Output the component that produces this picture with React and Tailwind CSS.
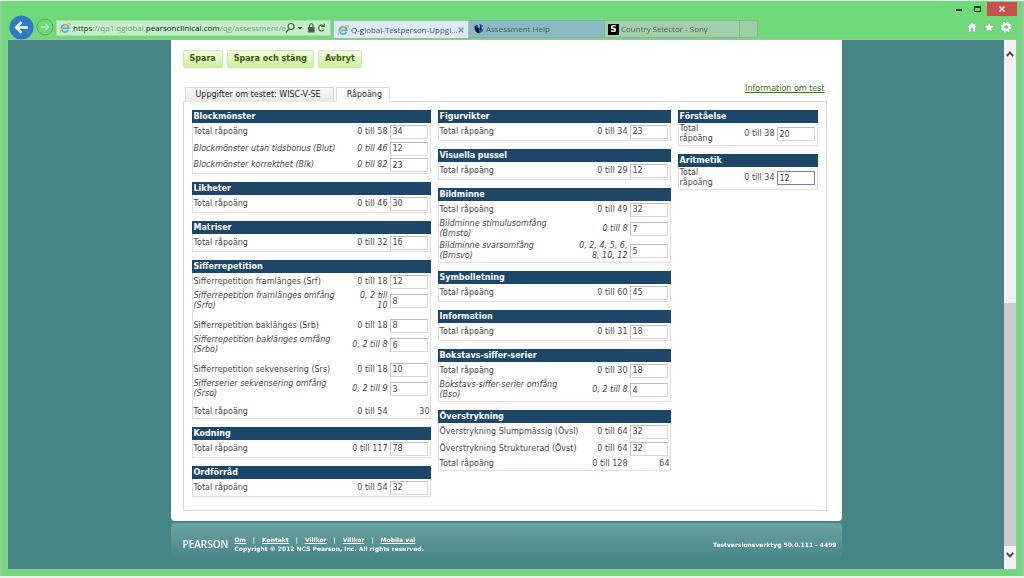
import React from "react";

const LEFT = [
  {
    title: "Blockmönster",
    rows: [
      { label: "Total råpoäng", range: "0 till 58", value: "34" },
      { label: "Blockmönster utan tidsbonus (Blut)", range: "0 till 46", value: "12", italic: true },
      { label: "Blockmönster korrekthet (Blk)", range: "0 till 82", value: "23", italic: true, kind: "short" },
    ],
  },
  { title: "Likheter", rows: [{ label: "Total råpoäng", range: "0 till 46", value: "30" }] },
  { title: "Matriser", rows: [{ label: "Total råpoäng", range: "0 till 32", value: "16" }] },
  {
    title: "Sifferrepetition",
    rows: [
      { label: "Sifferrepetition framlänges (Srf)", range: "0 till 18", value: "12" },
      { label: "Sifferrepetition framlänges omfång\n(Srfo)", range: "0, 2 till\n10", value: "8", italic: true, kind: "spaced" },
      { label: "Sifferrepetition baklänges (Srb)", range: "0 till 18", value: "8" },
      { label: "Sifferrepetition baklänges omfång\n(Srbo)", range: "0, 2 till 8", value: "6", italic: true, kind: "spaced" },
      { label: "Sifferrepetition sekvensering (Srs)", range: "0 till 18", value: "10" },
      { label: "Sifferserier sekvensering omfång\n(Srso)", range: "0, 2 till 9", value: "3", italic: true, kind: "spaced" },
      { label: "Total råpoäng", range: "0 till 54", sum: "30", kind: "sum" },
    ],
  },
  { title: "Kodning", rows: [{ label: "Total råpoäng", range: "0 till 117", value: "78" }] },
  { title: "Ordförråd", rows: [{ label: "Total råpoäng", range: "0 till 54", value: "32" }] },
];

const MIDDLE = [
  { title: "Figurvikter", rows: [{ label: "Total råpoäng", range: "0 till 34", value: "23" }] },
  { title: "Visuella pussel", rows: [{ label: "Total råpoäng", range: "0 till 29", value: "12" }] },
  {
    title: "Bildminne",
    rows: [
      { label: "Total råpoäng", range: "0 till 49", value: "32" },
      { label: "Bildminne stimulusomfång\n(Bmsto)", range: "0 till 8", value: "7", italic: true, kind: "double" },
      { label: "Bildminne svarsomfång\n(Bmsvo)", range: "0, 2, 4, 5, 6,\n8, 10, 12", value: "5", italic: true, kind: "double" },
    ],
  },
  { title: "Symbolletning", rows: [{ label: "Total råpoäng", range: "0 till 60", value: "45" }] },
  { title: "Information", rows: [{ label: "Total råpoäng", range: "0 till 31", value: "18" }] },
  {
    title: "Bokstavs-siffer-serier",
    rows: [
      { label: "Total råpoäng", range: "0 till 30", value: "18" },
      { label: "Bokstavs-siffer-serier omfång\n(Bso)", range: "0, 2 till 8", value: "4", italic: true, kind: "double" },
    ],
  },
  {
    title: "Överstrykning",
    rows: [
      { label: "Överstrykning Slumpmässig (Övsl)", range: "0 till 64", value: "32" },
      { label: "Överstrykning Strukturerad (Övst)", range: "0 till 64", value: "32" },
      { label: "Total råpoäng", range: "0 till 128", sum: "64", kind: "sum" },
    ],
  },
];

const RIGHT = [
  { title: "Förståelse", rows: [{ label: "Total\nråpoäng", range: "0 till 38", value: "20", kind: "double" }] },
  { title: "Aritmetik", rows: [{ label: "Total\nråpoäng", range: "0 till 34", value: "12", kind: "double", active: true }] },
];

const ROW_HEIGHT = {
  single: "h-[17px]",
  short: "h-4",
  double: "h-[22px]",
  spaced: "h-[27px]",
  sum: "h-[13px]",
};

function ScoreRow({ row, id }) {
  const kind = row.kind || "single";
  const pad = kind === "spaced" ? "pb-[5px]" : "pb-0";
  return (
    <tr className={`${ROW_HEIGHT[kind]} ${row.italic ? "italic" : ""}`}>
      <td className={`whitespace-pre pl-px align-middle ${pad}`}>
        {row.sum ? row.label : <label htmlFor={id} className="block">{row.label}</label>}
      </td>
      <td className={`whitespace-pre pr-[2px] text-right align-middle ${pad}`}>{row.range}</td>
      <td className={`w-10 align-middle not-italic ${pad}`}>
        {row.sum ? (
          <div className="text-right">{row.sum}</div>
        ) : (
          <input
            id={id}
            type="text"
            autoFocus={row.active}
            defaultValue={row.value}
            className={`block h-[14px] w-[38px] border bg-white pl-[2px] outline-none ${
              row.active ? "border-[#7080b8]" : "border-[#d9d9d9] border-t-[#bdbdbd] border-l-[#c4c4c4]"
            }`}
          />
        )}
      </td>
    </tr>
  );
}

function ScoreSection({ section }) {
  return (
    <section>
      <h3 className="h-[13px] bg-[#1c4769] pl-[2px] text-[8px] leading-[13px] font-bold text-white">{section.title}</h3>
      <table className="w-full border-separate border-spacing-0 border-x border-b border-[#dedede]">
        <tbody>
          {section.rows.map((row, i) => (
            <ScoreRow key={i} row={row} id={`${section.title}-${i}`} />
          ))}
        </tbody>
      </table>
    </section>
  );
}

function Column({ sections }) {
  return (
    <div className="flex flex-col gap-2">
      {sections.map((s) => (
        <ScoreSection key={s.title} section={s} />
      ))}
    </div>
  );
}

function IeLogo() {
  return (
    <svg viewBox="0 0 12 12" className="size-3 shrink-0">
      <path d="M9.300 8.200A3.700 3.700 0 1 1 9.800 6.300H3.500" fill="none" stroke="#5aa9dd" strokeWidth="1.800" />
      <path d="M1.400 10.800C.2 9 7.500 1 11 1.400c.8.600.2 2-.4 2.800" fill="none" stroke="#e5c04e" strokeWidth="1.200" />
    </svg>
  );
}

function TitleBar() {
  return (
    <div className="relative flex h-[39px] items-end px-[7px]">
      <button aria-label="Tillbaka" className="mr-px size-[25px] shrink-0">
        <svg viewBox="0 0 26 26" className="size-full">
          <circle cx="13" cy="13" r="12.500" fill="#2b7bc8" />
          <path d="M19.500 13H8M13 7.500L7.500 13l5.500 5.500" fill="none" stroke="#fff" strokeWidth="2.600" />
        </svg>
      </button>
      <button aria-label="Framåt" className="mb-1 ml-[1px] size-[18px] shrink-0">
        <svg viewBox="0 0 18 18" className="size-full">
          <circle cx="9" cy="9" r="8" fill="none" stroke="#55b162" />
          <path d="M5 9h7.500M9.500 6L12.500 9l-3 3" fill="none" stroke="#b5efbb" strokeWidth="1.300" />
        </svg>
      </button>
      <div className="mb-1 ml-[2px] flex h-4 w-[275px] shrink-0 items-center border border-[#a0dfa8] bg-[#c3f0c8] pl-[2px]">
        <IeLogo />
        <div className="ml-[2px] w-[211px] text-[8px] whitespace-nowrap text-[#7b9c80]">
          <span className="text-[#2c3a2e]">https</span>://qa1.qglobal.
          <span className="text-[#18241a]">pearsonclinical.com</span>/qg/assessment/e
        </div>
        <svg viewBox="0 0 44 12" className="ml-[1px] h-3 w-11 shrink-0" fill="none" stroke="#4c5f50" strokeWidth="1.200">
          <circle cx="6" cy="4.500" r="3" />
          <path d="M4 7L1 10.500" />
          <path d="M12.500 5h5l-2.500 2.500z" fill="#4c5f50" stroke="none" />
          <path d="M23.500 5.500h5.500v4.500h-5.500z" fill="#4c5f50" />
          <path d="M24.500 5V3.500a1.700 1.700 0 0 1 3.500 0V5" />
          <path d="M38.500 4A2.900 2.900 0 1 0 39 7.500M39.200 1.500V4.500h-3" />
        </svg>
      </div>
      <nav className="ml-[2px] flex h-5 min-w-0 pb-[2px] text-[8px] leading-none text-[#4b6155]">
        <a href="#tab1" className="flex w-[136px] items-center border border-b-0 border-[#9fc4b4] bg-[#dcebf3] pl-[3px] text-[#4a5860]">
          <IeLogo />
          <span className="ml-[2px] flex-1 whitespace-nowrap">Q-global-Testperson-Uppgi...</span>
          <svg viewBox="0 0 6 6" className="mr-1 size-[6px]" stroke="#7d8b90" strokeWidth="1.200">
            <path d="M.5.5l5 5M5.500.5l-5 5" />
          </svg>
        </a>
        <a href="#tab2" className="flex w-[135px] items-center border border-x-0 border-[#7fb0aa] bg-[#8bbac1] pl-1">
          <svg viewBox="0 0 12 12" className="size-3 shrink-0">
            <circle cx="6" cy="5.500" r="4.600" fill="#2460b5" />
            <path d="M1.500 3Q3.500 3 5.500 5L6.500 10.500Q2 9.500 1.500 3z" fill="#0e1730" />
            <path d="M7.500 2.500v5" fill="none" stroke="#0e1730" strokeWidth="1.200" />
            <path d="M4.500 1.200q2.500 1 1.200 3.500M9 4l1 2" fill="none" stroke="#c9dcf5" strokeWidth="1.100" />
          </svg>
          <span className="ml-[1px]">Assessment Help</span>
        </a>
        <a href="#tab3" className="flex w-[136px] items-center border border-[#85b88c] bg-[#a2cfac] pl-[3px]">
          <span className="flex size-[11px] items-center justify-center bg-black [font-family:'DejaVu_Sans',sans-serif] text-[9px] font-bold text-white">S</span>
          <span className="ml-[2px]">Country Selector - Sony</span>
        </a>
        <button aria-label="Ny flik" className="w-[18px] border border-l-0 border-[#85b88c] bg-[#9bd0a4]" />
      </nav>
      <div className="absolute top-0 right-[5px] flex items-center">
        <button aria-label="Minimera" className="flex h-[15px] w-5 items-center justify-center pt-[3px]">
          <span className="h-[2px] w-[6px] bg-[#1d3a22]" />
        </button>
        <button aria-label="Maximera" className="flex h-[15px] w-4 items-center justify-center">
          <span className="h-[6px] w-[7px] border border-t-2 border-[#1d3a22]" />
        </button>
        <button aria-label="Stäng" className="ml-[2px] flex h-[14px] w-[30px] items-center justify-center bg-[#c7504f]">
          <svg viewBox="0 0 6 6" className="size-[6px]" stroke="#fff" strokeWidth="1.400">
            <path d="M.5.5l5 5M5.500.5l-5 5" />
          </svg>
        </button>
      </div>
      <div className="absolute top-5 right-[10px] flex gap-[5px]">
        <button aria-label="Hem" className="size-3">
          <svg viewBox="0 0 12 12" className="size-full" fill="#fff" stroke="#7a9c7e" strokeWidth=".6">
            <path d="M6 1.500L1 6.200l.8.8.7-.5V11h2.600V7.500h1.800V11h2.600V6.500l.7.500.8-.8-1.700-1.600V2.300H8v1z" />
          </svg>
        </button>
        <button aria-label="Favoriter" className="size-3">
          <svg viewBox="0 0 12 12" className="size-full" fill="#fff" stroke="#7a9c7e" strokeWidth=".6">
            <path d="M6 .8l1.500 3.600 3.900.3-3 2.500.9 3.800L6 9l-3.300 2 .9-3.800-3-2.500 3.900-.3z" />
          </svg>
        </button>
        <button aria-label="Verktyg" className="size-3">
          <svg viewBox="0 0 12 12" className="size-full" fill="none">
            <circle cx="6" cy="6" r="4.700" stroke="#7a9c7e" strokeWidth="2.400" strokeDasharray="2.200 1.490" />
            <circle cx="6" cy="6" r="4.600" stroke="#fff" strokeWidth="1.800" strokeDasharray="1.900 1.710" />
            <circle cx="6" cy="6" r="3" stroke="#fff" strokeWidth="1.800" />
          </svg>
        </button>
      </div>
    </div>
  );
}

function ScrollBar() {
  return (
    <div className="flex w-3 shrink-0 flex-col bg-[#f0f0f0]">
      <button aria-label="Rulla upp" className="flex h-7 items-center justify-center">
        <svg viewBox="0 0 8 6" className="h-[6px] w-2" fill="none" stroke="#505050" strokeWidth="2">
          <path d="M.8 5L4 1.500 7.200 5" />
        </svg>
      </button>
      <div className="flex-[235]" />
      <div className="flex-[244] bg-[#cdcdcd]" />
      <button aria-label="Rulla ned" className="flex h-[23px] items-center justify-center pb-[6px]">
        <svg viewBox="0 0 8 6" className="h-[6px] w-2" fill="none" stroke="#505050" strokeWidth="2">
          <path d="M.8 1L4 4.500 7.200 1" />
        </svg>
      </button>
    </div>
  );
}

const ACTION =
  "h-[18px] rounded-[2px] border border-[#d0e8b0] bg-linear-to-b from-[#f4fce6] to-[#cdf09b] px-[6px] text-[8px] font-bold text-[#3a6200] shadow-xs";

export default function App() {
  return (
    <div className="flex min-h-screen flex-col border-t border-b-2 border-[#e9f3ea] bg-[#70da7b] [font-family:'Open_Sans','Noto_Sans',sans-serif]">
      <div className="flex flex-1 flex-col border-x-2 border-[#98cba0] pb-[6px]">
        <TitleBar />
        <div className="mx-[5px] -mt-px flex flex-1 border border-[#a3bfa6] bg-[#468585] [font-family:'DejaVu_Sans',Verdana,sans-serif] text-[8px] leading-[10px] text-[#4a4a4a]">
          <div className="min-w-0 flex-1">
            <main className="mx-auto max-w-[671px] rounded-b-[4px] bg-white pt-[10px] pr-[15px] pb-[10px] pl-3">
              <div className="flex gap-1">
                <button className={ACTION}>Spara</button>
                <button className={ACTION}>Spara och stäng</button>
                <button className={ACTION}>Avbryt</button>
              </div>
              <div className="mt-4 -mb-px flex items-end">
                <button className="ml-[2px] h-[15px] border border-b-0 border-[#dcdcdc] bg-linear-to-b from-[#fafafa] to-[#e8e8e8] pr-[12px] pl-[10px] text-[#222]">
                  Uppgifter om testet: WISC-V-SE
                </button>
                <button className="relative ml-[2px] h-[15px] border border-b-0 border-[#d5dfe6] bg-white pr-[7px] pl-[10px] text-[#222]">
                  Råpoäng
                </button>
                <a href="#info" className="mr-[2px] mb-2 ml-auto text-[#3f7a10] underline">Information om test</a>
              </div>
              <div className="grid grid-cols-[239fr_233fr_140fr] items-start gap-[7px] border border-[#d3dbe0] px-2 pt-2 pb-[13px]">
                <Column sections={LEFT} />
                <Column sections={MIDDLE} />
                <Column sections={RIGHT} />
              </div>
            </main>
            <footer className="mx-auto mt-[2px] flex max-w-[671px] items-center rounded-t-[4px] bg-linear-to-b from-[#6ba3a1] to-[#468585] pt-3 pr-[5px] pb-2 pl-3 text-[6px] leading-[9px] font-bold text-white">
              <div className="mr-[6px] [font-family:'Open_Sans','Noto_Sans',sans-serif] text-[10px] font-semibold">PEARSON</div>
              <div>
                <div className="flex gap-[7px]">
                  <a href="#om" className="underline">Om</a>
                  <span>|</span>
                  <a href="#kontakt" className="underline">Kontakt</a>
                  <span>|</span>
                  <a href="#villkor" className="underline">Villkor</a>
                  <span>|</span>
                  <a href="#villkor2" className="underline">Villkor</a>
                  <span>|</span>
                  <a href="#mobil" className="underline">Mobila val</a>
                </div>
                <p>Copyright © 2012 NCS Pearson, Inc. All rights reserved.</p>
              </div>
              <div className="ml-auto">Testversionsverktyg 50.0.111 - 4499</div>
            </footer>
          </div>
          <ScrollBar />
        </div>
      </div>
    </div>
  );
}
